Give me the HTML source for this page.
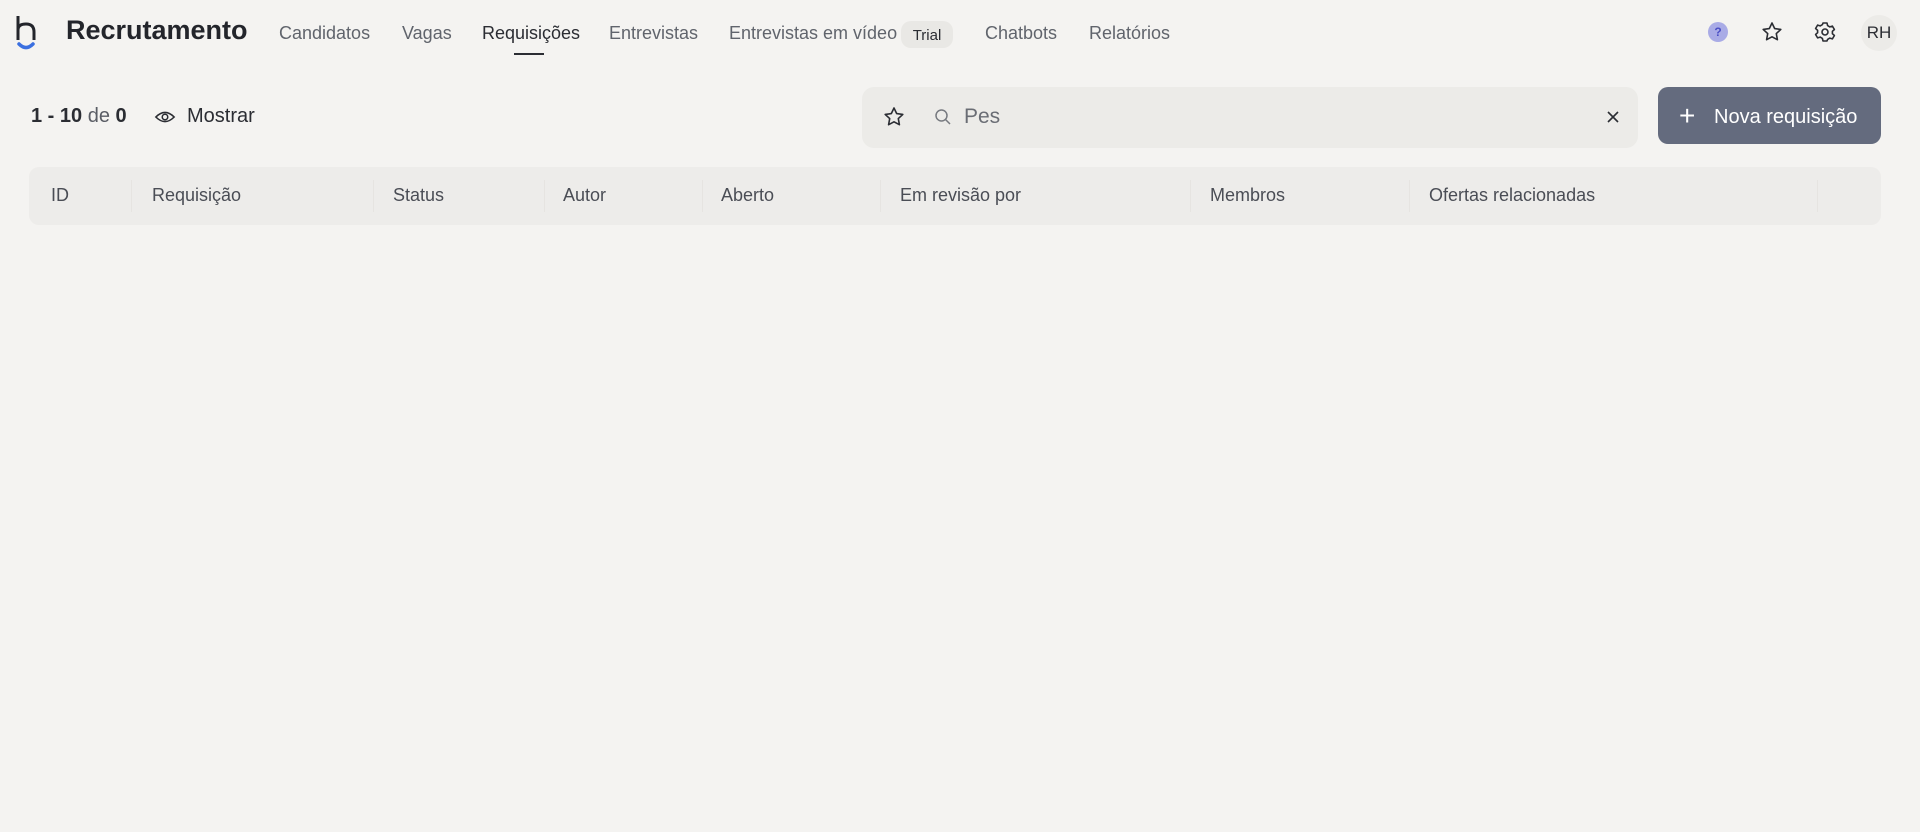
<!DOCTYPE html>
<html><head><meta charset="utf-8"><style>
body{margin:0;width:1920px;height:832px;background:#f4f3f1;font-family:"Liberation Sans",sans-serif;position:relative;overflow:hidden;color:#2b2d33}
.a{position:absolute;white-space:nowrap}
.nav{font-size:18px;color:#60646c;top:23px}
.th{font-size:18px;color:#4a4d55;top:185px}
.dv{position:absolute;top:180px;width:1px;height:32px;background:#e6e4e1}
</style></head><body>
<svg class="a" style="left:14px;top:14px" width="30" height="36" viewBox="0 0 30 36"><path d="M4 2V26M4 16Q4 10 12 10Q20 10 20 18V26" stroke="#23252b" stroke-width="3" fill="none"/><path d="M5 30Q12 37 19 30" stroke="#3b6fe0" stroke-width="3.5" fill="none" stroke-linecap="round"/></svg>
<div class="a" style="left:66px;top:15px;font-size:27px;font-weight:bold;color:#23252b">Recrutamento</div>
<div class="a nav" style="left:279px">Candidatos</div>
<div class="a nav" style="left:402px">Vagas</div>
<div class="a nav" style="left:482px;color:#2b2d33">Requisições</div>
<div class="a" style="left:514px;top:53px;width:30px;height:2px;background:#2b2d33"></div>
<div class="a nav" style="left:609px">Entrevistas</div>
<div class="a nav" style="left:729px">Entrevistas em vídeo</div>
<div class="a" style="left:901px;top:21px;width:52px;height:27px;border-radius:10px;background:#e9e8e5;font-size:15px;line-height:29px;text-align:center;color:#2b2d33">Trial</div>
<div class="a nav" style="left:985px">Chatbots</div>
<div class="a nav" style="left:1089px">Relatórios</div>
<div class="a" style="left:1708px;top:22px;width:20px;height:20px;border-radius:50%;background:#a9abe6;color:#4a4ec4;font-size:12px;text-align:center;line-height:20px;font-weight:bold">?</div>
<svg class="a" style="left:1760px;top:20px" width="24" height="24" viewBox="0 0 24 24"><path d="M12 3l2.7 5.6 6.1.8-4.5 4.2 1.1 6.1L12 16.8 6.6 19.7l1.1-6.1L3.2 9.4l6.1-.8z" fill="none" stroke="#2b2d33" stroke-width="1.6" stroke-linejoin="round"/></svg>
<svg class="a" style="left:1813px;top:20px" width="24" height="24" viewBox="0 0 24 24"><circle cx="12" cy="12" r="3" fill="none" stroke="#2b2d33" stroke-width="1.6"/><path d="M10 3h4l.6 2.6 2.2 1.3 2.6-.8 2 3.4-2 1.8v2.4l2 1.8-2 3.4-2.6-.8-2.2 1.3L14 21h-4l-.6-2.6-2.2-1.3-2.6.8-2-3.4 2-1.8v-2.4l-2-1.8 2-3.4 2.6.8 2.2-1.3z" fill="none" stroke="#2b2d33" stroke-width="1.6" stroke-linejoin="round"/></svg>
<div class="a" style="left:1861px;top:15px;width:36px;height:36px;border-radius:50%;background:#ecebe8;font-size:17px;line-height:36px;text-align:center;color:#2b2d33">RH</div>
<div class="a" style="left:31px;top:105px;font-size:20px;color:#2b2d33"><b>1 - 10</b> <span style="color:#5a5d65">de</span> <b>0</b></div>
<svg class="a" style="left:154px;top:106px" width="22" height="22" viewBox="0 0 24 24"><path d="M2 12Q12 2 22 12Q12 22 2 12z" fill="none" stroke="#2b2d33" stroke-width="1.7"/><circle cx="12" cy="12" r="3" fill="none" stroke="#2b2d33" stroke-width="1.7"/></svg>
<div class="a" style="left:187px;top:105px;font-size:20px;color:#2b2d33">Mostrar</div>
<div class="a" style="left:862px;top:87px;width:776px;height:61px;border-radius:12px;background:#ecebe8"></div>
<svg class="a" style="left:882px;top:105px" width="24" height="24" viewBox="0 0 24 24"><path d="M12 3l2.7 5.6 6.1.8-4.5 4.2 1.1 6.1L12 16.8 6.6 19.7l1.1-6.1L3.2 9.4l6.1-.8z" fill="none" stroke="#2b2d33" stroke-width="1.6" stroke-linejoin="round"/></svg>
<svg class="a" style="left:934px;top:108px" width="18" height="18" viewBox="0 0 18 18"><circle cx="7.5" cy="7.5" r="5.5" fill="none" stroke="#777a80" stroke-width="1.5"/><path d="M11.5 11.5L16 16" stroke="#777a80" stroke-width="1.5"/></svg>
<div class="a" style="left:964px;top:105px;font-size:21px;color:#6a6d74">Pes</div>
<svg class="a" style="left:1606px;top:110px" width="14" height="14" viewBox="0 0 14 14"><path d="M2 2L12 12M12 2L2 12" stroke="#2b2d33" stroke-width="1.6"/></svg>
<div class="a" style="left:1658px;top:87px;width:223px;height:57px;border-radius:10px;background:#646b7e"></div>
<div class="a" style="left:1679px;top:101px;font-size:28px;color:#fff;line-height:30px">+</div>
<div class="a" style="left:1714px;top:106px;font-size:20px;color:#fff">Nova requisição</div>
<div class="a" style="left:29px;top:167px;width:1852px;height:58px;border-radius:10px;background:#edecea"></div>
<div class="dv" style="left:131px"></div><div class="dv" style="left:373px"></div><div class="dv" style="left:544px"></div><div class="dv" style="left:702px"></div><div class="dv" style="left:880px"></div><div class="dv" style="left:1190px"></div><div class="dv" style="left:1409px"></div><div class="dv" style="left:1817px"></div>
<div class="a th" style="left:51px">ID</div>
<div class="a th" style="left:152px">Requisição</div>
<div class="a th" style="left:393px">Status</div>
<div class="a th" style="left:563px">Autor</div>
<div class="a th" style="left:721px">Aberto</div>
<div class="a th" style="left:900px">Em revisão por</div>
<div class="a th" style="left:1210px">Membros</div>
<div class="a th" style="left:1429px">Ofertas relacionadas</div>
</body></html>
